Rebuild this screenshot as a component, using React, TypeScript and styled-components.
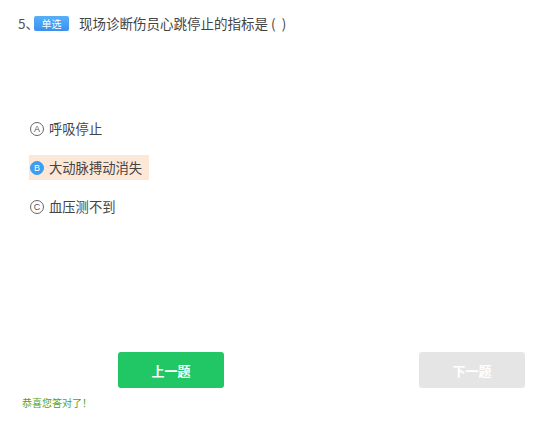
import React from 'react';
import styled, { createGlobalStyle } from 'styled-components';

interface Choice {
  key: string;
  text: string;
  selected?: boolean;
}

const choices: Choice[] = [
  { key: 'A', text: '呼吸停止' },
  { key: 'B', text: '大动脉搏动消失', selected: true },
  { key: 'C', text: '血压测不到' },
];

const GlobalStyle = createGlobalStyle`
  html, body {
    margin: 0;
    padding: 0;
    background: #ffffff;
  }
  body {
    font-family: "Noto Sans CJK SC", "Noto Sans", "Liberation Sans", sans-serif;
    color: #444;
  }
`;

export default function App() {
  return (
    <>
      <GlobalStyle />
      <Page>
        <QuestionHeader>
          <QuestionNo>5、</QuestionNo>
          <TypeBadge>单选</TypeBadge>
          <QuestionText>现场诊断伤员心跳停止的指标是{'\u00a0(\u00a0\u00a0)'}</QuestionText>
        </QuestionHeader>

        <OptionList>
          {choices.map((c) => (
            <OptionRow key={c.key}>
              <OptionItem $selected={!!c.selected}>
                <OptionMark $selected={!!c.selected}>{c.key}</OptionMark>
                <OptionText>{c.text}</OptionText>
              </OptionItem>
            </OptionRow>
          ))}
        </OptionList>

        <ButtonRow>
          <NavButton $disabled={false}>上一题</NavButton>
          <NavButton $disabled>下一题</NavButton>
        </ButtonRow>
        <ResultText>恭喜您答对了！</ResultText>
      </Page>
    </>
  );
}

const Page = styled.div`
  width: 558px;
  height: 434px;
  box-sizing: border-box;
  padding: 14px 0 0 18px;
  display: flex;
  flex-direction: column;
`;

const QuestionHeader = styled.div`
  display: flex;
  align-items: center;
  height: 18px;
`;

const QuestionNo = styled.span`
  font-size: 13.5px;
  color: #555;
  width: 16px;
`;

const TypeBadge = styled.span`
  display: inline-flex;
  align-items: center;
  justify-content: center;
  width: 35px;
  height: 15px;
  border-radius: 2px;
  background: linear-gradient(180deg, #58b0f7 0%, #3a90ef 100%);
  color: #fff;
  font-size: 10px;
  margin-right: 10px;
`;

const QuestionText = styled.span`
  font-size: 13.5px;
  color: #444;
`;

const OptionList = styled.div`
  display: flex;
  flex-direction: column;
  gap: 14px;
  margin-top: 84px;
  padding-left: 11px;
`;

const OptionRow = styled.div`
  display: flex;
`;

const OptionItem = styled.div<{ $selected: boolean }>`
  display: inline-flex;
  align-items: center;
  gap: 5px;
  height: 25px;
  padding: 0 7px 0 1px;
  background: ${(p) => (p.$selected ? '#fde8d7' : 'transparent')};
`;

const OptionMark = styled.span<{ $selected: boolean }>`
  display: inline-flex;
  align-items: center;
  justify-content: center;
  width: 14px;
  height: 14px;
  box-sizing: border-box;
  border-radius: 50%;
  font-family: "Liberation Sans", sans-serif;
  font-size: 9px;
  border: 1px solid ${(p) => (p.$selected ? '#3d9df2' : '#666')};
  background: ${(p) => (p.$selected ? '#3d9df2' : '#fff')};
  color: ${(p) => (p.$selected ? '#fff' : '#555')};
`;

const OptionText = styled.span`
  font-size: 13.3px;
  color: #444;
`;

const ButtonRow = styled.div`
  display: flex;
  justify-content: space-between;
  margin-top: 133px;
  padding: 0 33px 0 100px;
`;

const NavButton = styled.button<{ $disabled: boolean }>`
  width: 106px;
  height: 36px;
  border: none;
  border-radius: 3px;
  background: ${(p) => (p.$disabled ? '#e5e5e5' : '#20c764')};
  color: #fff;
  font-family: "Noto Sans CJK SC", sans-serif;
  font-size: 13px;
  font-weight: bold;
  cursor: ${(p) => (p.$disabled ? 'not-allowed' : 'pointer')};
`;

const ResultText = styled.div`
  margin-top: 7px;
  padding-left: 4px;
  font-size: 10px;
  color: #4f9f2f;
`;
